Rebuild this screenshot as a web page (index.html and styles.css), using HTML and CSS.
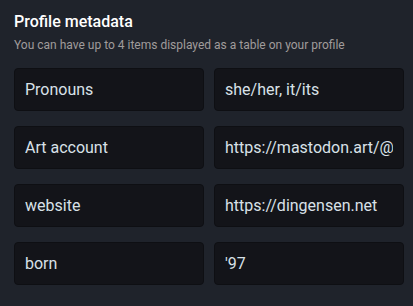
FILE: index.html
```html
<!DOCTYPE html>
<html>
<head>
<meta charset="utf-8">
<link rel="stylesheet" href="styles.css">
</head>
<body>
<section class="panel">
  <h3 class="title">Profile metadata</h3>
  <p class="hint">You can have up to 4 items displayed as a table on your profile</p>
  <div class="fields">
    <input class="field" type="text" value="Pronouns" readonly>
    <input class="field" type="text" value="she/her, it/its" readonly>
    <input class="field" type="text" value="Art account" readonly>
    <input class="field" type="text" value="https://mastodon.art/@dingensen" readonly>
    <input class="field" type="text" value="website" readonly>
    <input class="field" type="text" value="https://dingensen.net" readonly>
    <input class="field" type="text" value="born" readonly>
    <input class="field" type="text" value="'97" readonly>
  </div>
</section>
</body>
</html>
```

FILE: styles.css
```css
html, body {
  margin: 0;
  padding: 0;
  background: #1f232b;
  height: 100%;
}
.panel {
  padding: 13px 0 0 14px;
  font-family: Roboto, "Liberation Sans", sans-serif;
}
.title {
  margin: 0;
  font-size: 16px;
  font-weight: 500;
  line-height: 18.75px;
  color: #ffffff;
}
.hint {
  margin: 6px 0 0;
  font-size: 12px;
  line-height: 14px;
  color: #a09c9b;
}
.fields {
  margin-top: 16.25px;
  display: grid;
  grid-template-columns: 190px 190px;
  grid-auto-rows: 43px;
  column-gap: 10px;
  row-gap: 15px;
}
.field {
  box-sizing: border-box;
  width: 100%;
  height: 43px;
  margin: 0;
  padding: 0 10px;
  background: #131419;
  border: 1px solid #0e0f13;
  border-radius: 4px;
  color: #d9e1e8;
  font-family: Roboto, "Liberation Sans", sans-serif;
  font-size: 16px;
  outline: none;
}
```
